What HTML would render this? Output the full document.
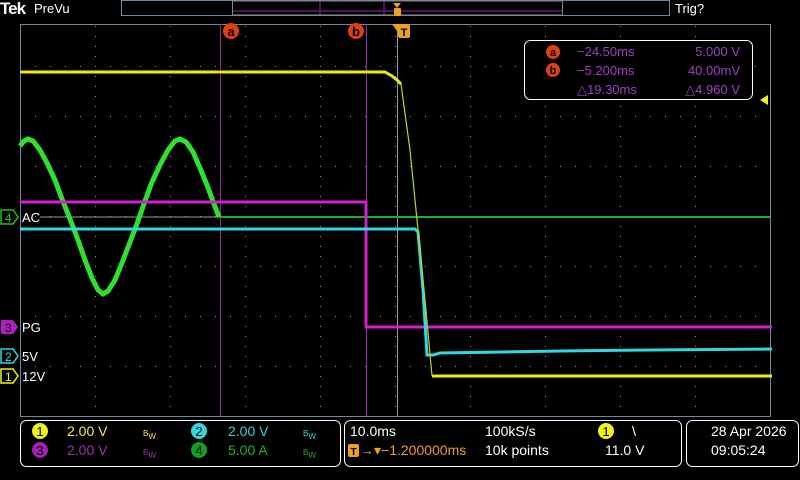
<!DOCTYPE html>
<html><head><meta charset="utf-8"><style>
html,body{margin:0;padding:0;background:#000;width:800px;height:480px;overflow:hidden}
svg{display:block}
text{font-family:"Liberation Sans",sans-serif}
</style></head><body>
<svg width="800" height="480" viewBox="0 0 800 480" xmlns="http://www.w3.org/2000/svg">
<defs>
<pattern id="vdots" x="20" y="16" width="75" height="10" patternUnits="userSpaceOnUse"><rect x="0" y="0" width="1" height="1" fill="#999"/></pattern>
<pattern id="hdots" x="20" y="16" width="15" height="50" patternUnits="userSpaceOnUse"><rect x="0" y="0" width="1" height="1" fill="#999"/></pattern>
</defs>
<rect width="800" height="480" fill="#000"/>
<!-- top bar -->
<text x="0" y="14" font-size="17" font-weight="bold" fill="#fff" font-family="Liberation Serif,serif" letter-spacing="-1">Tek</text>
<text x="34" y="13" font-size="13" fill="#fff">PreVu</text>
<rect x="121.5" y="0.5" width="548" height="15" fill="#000" stroke="#6f8aa0"/>
<rect x="232.5" y="1" width="330" height="14" fill="none" stroke="#888"/>
<line x1="233" y1="11" x2="562" y2="11" stroke="#a020b0"/>
<line x1="320" y1="1" x2="320" y2="15" stroke="#a020b0"/>
<line x1="384" y1="1" x2="384" y2="15" stroke="#a020b0"/>
<polygon points="393,3 401,3 397,8" fill="#f0a020"/>
<rect x="394" y="8" width="7" height="8" rx="1" fill="#f0a020"/>
<text x="675" y="13" font-size="13" fill="#fff">Trig?</text>
<!-- graticule -->
<rect x="20" y="26" width="751" height="391" fill="url(#vdots)"/>
<rect x="20" y="26" width="750" height="391" fill="url(#hdots)"/>
<rect x="20.5" y="24.5" width="750" height="392" fill="none" stroke="#6f8aa0" stroke-width="1"/>
<!-- cursors -->
<line x1="220.5" y1="24" x2="220.5" y2="416" stroke="#a020b0"/>
<line x1="366.5" y1="24" x2="366.5" y2="416" stroke="#a020b0"/>
<line x1="397.5" y1="24" x2="397.5" y2="416" stroke="#999"/>
<circle cx="231" cy="31" r="8" fill="#e04010"/><text x="231" y="36" font-size="13" fill="#000" text-anchor="middle" font-weight="bold">a</text>
<circle cx="356" cy="31" r="8" fill="#e04010"/><text x="356" y="36" font-size="13" fill="#000" text-anchor="middle" font-weight="bold">b</text>
<polygon points="392,24 402,24 397,31" fill="#f0a020"/>
<rect x="398" y="24" width="12" height="14" rx="2" fill="#f0a020"/><text x="404" y="36" font-size="11" fill="#000" text-anchor="middle" font-weight="bold">T</text>
<!-- ch4 ground line -->
<line x1="40" y1="217" x2="220" y2="217" stroke="#999"/>
<!-- waveforms -->
<polyline fill="none" stroke="#20b020" stroke-width="2" points="220,217 770,217"/>
<path fill="none" stroke="#30e030" stroke-width="5" d="M20,146 L24,141 L28,139 L33,141 L40,150 L47,163 L55,180 L62,199 L70,219 L78,240 L85,260 L92,278 L98,290 L103,294 L108,291 L115,280 L122,263 L130,242 L138,221 L145,201 L152,182 L160,165 L168,150 L175,141 L180,139 L186,142 L193,152 L200,168 L207,185 L214,204 L219,217"/>
<polyline fill="none" stroke="#d020d0" stroke-width="3" points="20,202 366,202 366,327 772,327"/>
<polyline fill="none" stroke="#30d8e0" stroke-width="3" points="20,229 415,229 418,232 423,290 427,355 433,355 440,353 560,351 650,350 772,349"/>
<polyline fill="none" stroke="#e8e820" stroke-width="3" points="20,72 385,72 392,76 397,80 401,84"/>
<polyline fill="none" stroke="#c8d020" stroke-width="1.2" points="401,84 410,150 418,230 425,300 432,376"/>
<polyline fill="none" stroke="#e8e820" stroke-width="3" points="432,376 772,376"/>
<!-- trigger level arrow -->
<polygon points="760,100 768,95 768,105" fill="#f0f020"/>
<!-- channel labels -->
<g font-size="13">
<polygon points="1,210 13,210 18,217 13,224 1,224" fill="#000" stroke="#20c020" stroke-width="1.5"/><text x="5" y="222" fill="#20c020" font-size="12">4</text><text x="22" y="222" fill="#fff">AC</text>
<polygon points="1,320 13,320 18,327 13,334 1,334" fill="#b020c0"/><text x="5" y="332" fill="#000" font-size="12">3</text><text x="22" y="332" fill="#fff">PG</text>
<polygon points="1,349 13,349 18,356 13,363 1,363" fill="#000" stroke="#30d8e0" stroke-width="1.5"/><text x="5" y="361" fill="#30d8e0" font-size="12">2</text><text x="22" y="361" fill="#fff">5V</text>
<polygon points="1,369 13,369 18,376 13,383 1,383" fill="#000" stroke="#f0f020" stroke-width="1.5"/><text x="5" y="381" fill="#f0f020" font-size="12">1</text><text x="22" y="381" fill="#fff">12V</text>
</g>
<!-- measurement box -->
<rect x="524.5" y="40.5" width="228" height="59" rx="6" fill="#000" stroke="#fff"/>
<g font-size="13" fill="#a040c0">
<circle cx="553" cy="52" r="7" fill="#e04010"/><text x="553" y="56" fill="#000" text-anchor="middle" font-weight="bold" font-size="11">a</text>
<circle cx="553" cy="70" r="7" fill="#e04010"/><text x="553" y="74" fill="#000" text-anchor="middle" font-weight="bold" font-size="11">b</text>
<text x="577" y="56">−24.50ms</text><text x="740" y="56" text-anchor="end">5.000 V</text>
<text x="577" y="75">−5.200ms</text><text x="740" y="75" text-anchor="end">40.00mV</text>
<text x="577" y="94">△19.30ms</text><text x="740" y="94" text-anchor="end">△4.960 V</text>
</g>
<!-- bottom boxes -->
<rect x="20.5" y="420.5" width="320" height="46" rx="6" fill="#000" stroke="#fff"/>
<rect x="344.5" y="420.5" width="337" height="46" rx="6" fill="#000" stroke="#fff"/>
<rect x="686.5" y="420.5" width="112" height="46" rx="6" fill="#000" stroke="#fff"/>
<g font-size="14">
<circle cx="40" cy="431" r="8" fill="#f0f020"/><text x="40" y="436" text-anchor="middle" fill="#000" font-size="13">1</text>
<text x="67" y="436" fill="#f0f040">2.00 V</text><text x="143" y="436" fill="#f0f040" font-size="8">B<tspan dy="3">W</tspan></text>
<circle cx="199" cy="431" r="8" fill="#30d8e0"/><text x="199" y="436" text-anchor="middle" fill="#000" font-size="13">2</text>
<text x="228" y="436" fill="#40d0d0">2.00 V</text><text x="303" y="436" fill="#40d0d0" font-size="8">B<tspan dy="3">W</tspan></text>
<circle cx="40" cy="450" r="8" fill="#a020b0"/><text x="40" y="455" text-anchor="middle" fill="#000" font-size="13">3</text>
<text x="67" y="455" fill="#a030b0">2.00 V</text><text x="143" y="455" fill="#a030b0" font-size="8">B<tspan dy="3">W</tspan></text>
<circle cx="199" cy="450" r="8" fill="#10a020"/><text x="199" y="455" text-anchor="middle" fill="#000" font-size="13">4</text>
<text x="228" y="455" fill="#20b020">5.00 A</text><text x="303" y="455" fill="#20b020" font-size="8">B<tspan dy="3">W</tspan></text>
<text x="350" y="436" fill="#fff">10.0ms</text>
<text x="485" y="436" fill="#fff">100kS/s</text>
<circle cx="606" cy="431" r="8" fill="#f0f020"/><text x="606" y="436" text-anchor="middle" fill="#000" font-size="13">1</text>
<text x="632" y="436" fill="#fff">\</text>
<rect x="348" y="444" width="11" height="13" rx="2" fill="#f0a020"/><text x="353.5" y="455" font-size="10" text-anchor="middle" fill="#000" font-weight="bold">T</text>
<text x="360" y="455" fill="#f0a020">→▾−1.200000ms</text>
<text x="485" y="455" fill="#fff">10k points</text>
<text x="605" y="455" fill="#fff">11.0 V</text>
<text x="711" y="436" fill="#fff">28 Apr  2026</text>
<text x="711" y="455" fill="#fff">09:05:24</text>
</g>
</svg>
</body></html>
